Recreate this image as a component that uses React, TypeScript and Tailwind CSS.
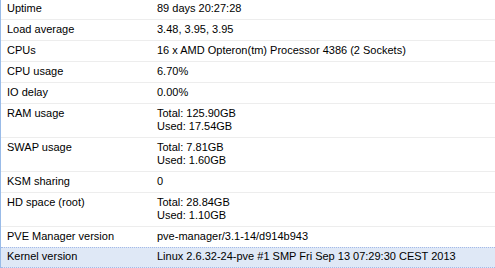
import React from "react";

type Row = { name: string; value: string[]; selected?: boolean };

const rows: Row[] = [
  { name: "Uptime", value: ["89 days 20:27:28"] },
  { name: "Load average", value: ["3.48, 3.95, 3.95"] },
  { name: "CPUs", value: ["16 x AMD Opteron(tm) Processor 4386 (2 Sockets)"] },
  { name: "CPU usage", value: ["6.70%"] },
  { name: "IO delay", value: ["0.00%"] },
  { name: "RAM usage", value: ["Total: 125.90GB", "Used: 17.54GB"] },
  { name: "SWAP usage", value: ["Total: 7.81GB", "Used: 1.60GB"] },
  { name: "KSM sharing", value: ["0"] },
  { name: "HD space (root)", value: ["Total: 28.84GB", "Used: 1.10GB"] },
  { name: "PVE Manager version", value: ["pve-manager/3.1-14/d914b943"] },
  { name: "Kernel version", value: ["Linux 2.6.32-24-pve #1 SMP Fri Sep 13 07:29:30 CEST 2013"], selected: true },
];

export default function App() {
  return (
    <div
      className="w-[495px] h-[268px] overflow-hidden bg-white border-l border-[#99bbe8] text-[11px] leading-[13px] text-black"
      style={{ fontFamily: '"Liberation Sans", Arial, sans-serif' }}
    >
      <div className="-mt-[1px]">
        {rows.map((r, i) => {
          const nextSelected = rows[i + 1]?.selected;
          const rowCls = r.selected
            ? "bg-[#dfe8f6] border-y border-dotted border-[#a3bae9]"
            : nextSelected
            ? ""
            : "border-b border-[#ededed]";
          const pad = r.selected ? "pt-[2px] pb-[4px]" : "pt-[3px] pb-[4px]";
          return (
            <div key={r.name} className={`flex ${rowCls}`}>
              <div className={`w-[150px] shrink-0 px-[6px] ${pad}`}>{r.name}</div>
              <div className={`flex-1 px-[6px] whitespace-nowrap ${pad}`}>
                {r.value.map((v) => (
                  <div key={v}>{v}</div>
                ))}
              </div>
            </div>
          );
        })}
      </div>
    </div>
  );
}
